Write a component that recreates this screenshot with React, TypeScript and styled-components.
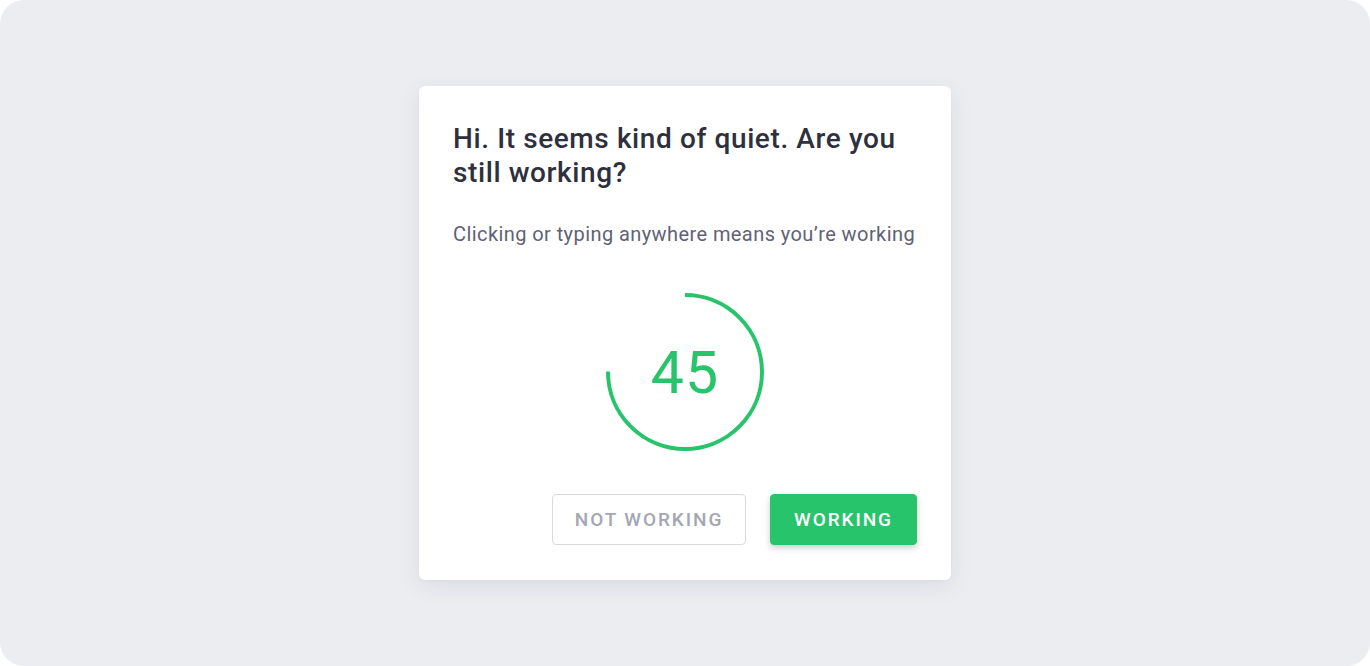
import React from "react";
import styled, { createGlobalStyle } from "styled-components";

const GlobalStyle = createGlobalStyle`
  html, body {
    margin: 0;
    padding: 0;
    background: #ffffff;
  }
  body {
    font-family: Roboto, "Noto Sans", sans-serif;
    -webkit-font-smoothing: antialiased;
  }
`;

const Screen = styled.div`
  width: 1370px;
  height: 666px;
  background: #ecedf1;
  border-radius: 24px;
  display: flex;
  align-items: center;
  justify-content: center;
  box-sizing: border-box;
`;

const Card = styled.div`
  width: 532px;
  height: 494px;
  box-sizing: border-box;
  background: #ffffff;
  border-radius: 6px;
  box-shadow: 0 6px 24px rgba(40, 44, 70, 0.08), 0 1px 3px rgba(40, 44, 70, 0.04);
  padding: 36px 34px 35px 34px;
  display: flex;
  flex-direction: column;
`;

const Title = styled.h1`
  margin: 0;
  font-family: Roboto, sans-serif;
  font-weight: 500;
  font-size: 28px;
  line-height: 34px;
  color: #2e303e;
  letter-spacing: 0.6px;
`;

const Subtitle = styled.p`
  margin: 30px 0 0 0;
  font-family: Roboto, sans-serif;
  font-weight: 400;
  font-size: 20px;
  line-height: 28px;
  color: #5f6276;
  letter-spacing: 0.42px;
`;

const TimerWrap = styled.div`
  margin-top: 44px;
  align-self: center;
  position: relative;
  width: 160px;
  height: 160px;
  display: flex;
  align-items: center;
  justify-content: center;
`;

const Ring = styled.svg`
  position: absolute;
  inset: 0;
`;

const Count = styled.span`
  position: relative;
  font-family: Roboto, sans-serif;
  font-weight: 400;
  font-size: 59px;
  line-height: 1;
  color: #27c46b;
  letter-spacing: 1px;
`;

const Actions = styled.div`
  margin-top: auto;
  display: flex;
  justify-content: flex-end;
  gap: 24px;
`;

const Button = styled.button<{ $primary?: boolean }>`
  height: 51px;
  padding: 0;
  width: ${(p) => (p.$primary ? "147px" : "194px")};
  box-sizing: border-box;
  border-radius: 4px;
  font-family: Roboto, sans-serif;
  font-weight: 500;
  font-size: 19px;
  letter-spacing: 1.9px;
  text-transform: uppercase;
  cursor: pointer;
  border: 1px solid ${(p) => (p.$primary ? "#27c46b" : "#d9dae0")};
  background: ${(p) => (p.$primary ? "#27c46b" : "#ffffff")};
  color: ${(p) => (p.$primary ? "#ffffff" : "#a4a6b2")};
  box-shadow: ${(p) =>
    p.$primary ? "0 3px 6px rgba(20, 40, 30, 0.22)" : "none"};
`;

export default function App() {
  const r = 77;
  const c = 2 * Math.PI * r;
  const frac = 45 / 60;
  return (
    <>
      <GlobalStyle />
      <Screen>
        <Card>
          <Title>Hi. It seems kind of quiet. Are you still working?</Title>
          <Subtitle>Clicking or typing anywhere means you’re working</Subtitle>
          <TimerWrap>
            <Ring width="160" height="160" viewBox="0 0 160 160">
              <circle
                cx="80"
                cy="80"
                r={r}
                fill="none"
                stroke="#27c46b"
                strokeWidth="4"
                strokeDasharray={`${c * frac} ${c}`}
                transform="rotate(-90 80 80)"
              />
            </Ring>
            <Count>45</Count>
          </TimerWrap>
          <Actions>
            <Button>Not Working</Button>
            <Button $primary>Working</Button>
          </Actions>
        </Card>
      </Screen>
    </>
  );
}
